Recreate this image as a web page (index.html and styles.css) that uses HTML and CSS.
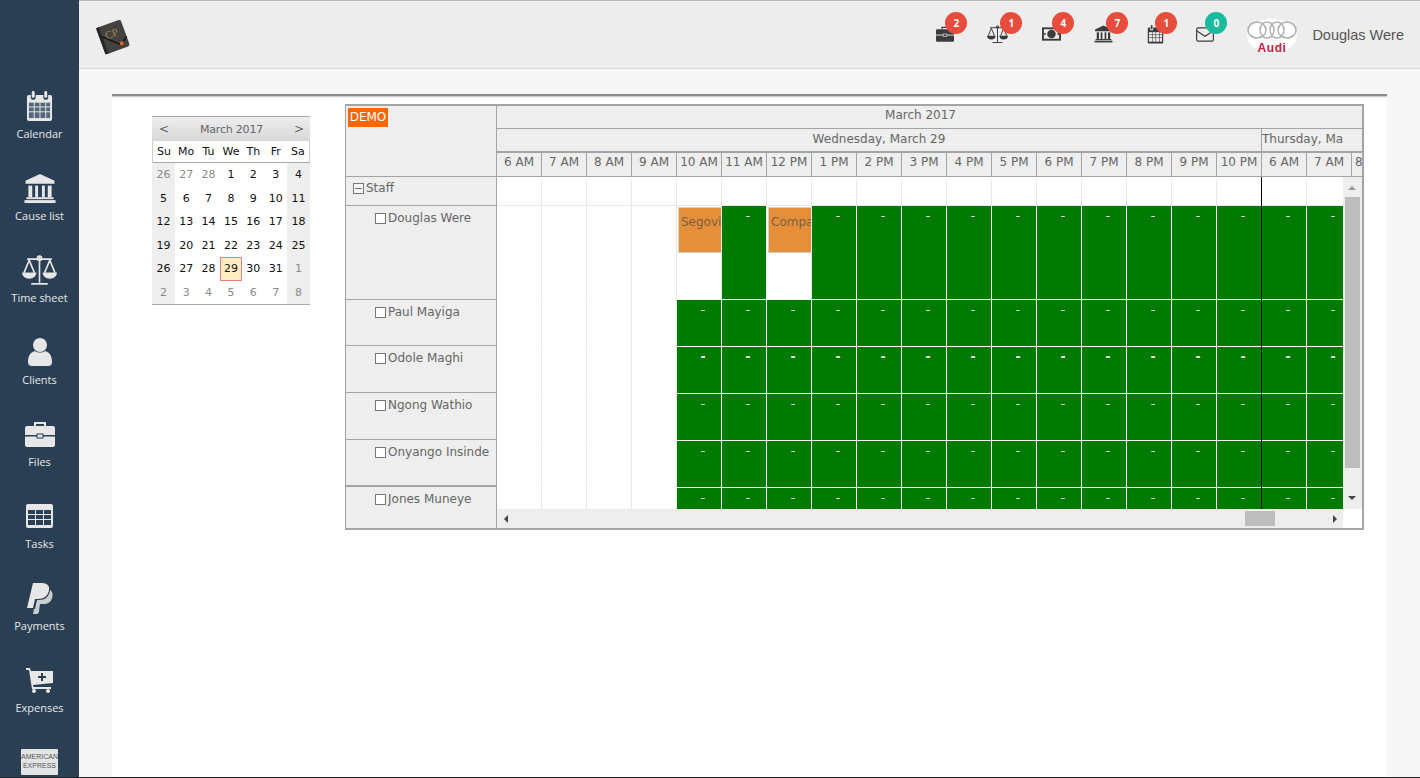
FILE: index.html
```html
<!DOCTYPE html>
<html>
<head>
<meta charset="utf-8">
<title>Calendar</title>
<link rel="stylesheet" href="styles.css">
</head>
<body>
<svg class="defs" width="0" height="0">
  <symbol id="i-cal" viewBox="0 0 28 32">
    <rect x="1" y="4" width="26" height="27" rx="2" fill="currentColor"/>
    <rect x="5" y="1" width="5" height="8" rx="2" fill="var(--hole)"/>
    <rect x="18" y="1" width="5" height="8" rx="2" fill="var(--hole)"/>
    <rect x="6" y="0" width="3" height="7" rx="1.5" fill="currentColor"/>
    <rect x="19" y="0" width="3" height="7" rx="1.5" fill="currentColor"/>
    <g fill="var(--cell)">
      <rect x="3" y="12" width="5" height="4"/><rect x="9" y="12" width="5" height="4"/><rect x="15" y="12" width="5" height="4"/><rect x="21" y="12" width="4" height="4"/>
      <rect x="3" y="17" width="5" height="4"/><rect x="9" y="17" width="5" height="4"/><rect x="15" y="17" width="5" height="4"/><rect x="21" y="17" width="4" height="4"/>
      <rect x="3" y="22" width="5" height="6"/><rect x="9" y="22" width="5" height="6"/><rect x="15" y="22" width="5" height="6"/><rect x="21" y="22" width="4" height="6"/>
    </g>
  </symbol>
  <symbol id="i-bank" viewBox="0 0 32 32">
    <g fill="currentColor">
      <polygon points="16,1 31,8 31,11 1,11 1,8"/>
      <rect x="4" y="13" width="4" height="12"/><rect x="11" y="13" width="3" height="12"/><rect x="18" y="13" width="3" height="12"/><rect x="24" y="13" width="4" height="12"/>
      <rect x="2" y="25" width="28" height="2"/><rect x="0" y="28" width="32" height="3"/>
    </g>
  </symbol>
  <symbol id="i-scale" viewBox="0 0 34 30">
    <g fill="none" stroke="currentColor" stroke-width="1.6">
      <path d="M17 2v25M9 28h16M5 4h24"/>
      <circle cx="17" cy="3" r="2"/>
      <path d="M7 5 2 17M7 5l5 12M27 5l-5 12M27 5l5 12"/>
    </g>
    <path d="M0 17h14a7 6 0 0 1-14 0zM20 17h14a7 6 0 0 1-14 0z" fill="currentColor"/>
  </symbol>
  <symbol id="i-user" viewBox="0 0 24 28">
    <ellipse cx="12" cy="7" rx="7" ry="7" fill="currentColor"/>
    <path d="M0 24c0-7 3-10 7-11 3 2 7 2 10 0 4 1 7 4 7 11 0 3-2 4-4 4H4c-2 0-4-1-4-4z" fill="currentColor"/>
  </symbol>
  <symbol id="i-case" viewBox="0 0 30 26">
    <path d="M10 5V2h10v3" fill="none" stroke="currentColor" stroke-width="2"/>
    <rect x="0" y="5" width="30" height="21" rx="2" fill="currentColor"/>
    <rect x="0" y="14" width="30" height="1.5" fill="var(--hole)"/>
    <rect x="12" y="13" width="6" height="4" fill="currentColor" stroke="var(--hole)"/>
  </symbol>
  <symbol id="i-table" viewBox="0 0 27 24">
    <rect width="27" height="24" rx="2" fill="currentColor"/>
    <g fill="var(--hole)">
      <rect x="2" y="6" width="7" height="4"/><rect x="10" y="6" width="7" height="4"/><rect x="18" y="6" width="7" height="4"/>
      <rect x="2" y="11" width="7" height="4"/><rect x="10" y="11" width="7" height="4"/><rect x="18" y="11" width="7" height="4"/>
      <rect x="2" y="16" width="7" height="5"/><rect x="10" y="16" width="7" height="5"/><rect x="18" y="16" width="7" height="5"/>
    </g>
  </symbol>
  <symbol id="i-pay" viewBox="0 0 26 31">
    <path d="M6 0h9c5 0 8 3 7 7-1 6-5 9-11 9H8l-2 9H0z" fill="currentColor"/>
    <path d="M23 7c3 2 3 5 2 8-1 4-4 6-9 6h-3l-1 7c0 2-1 3-2 3H6l1-5h1l2-9h2c6 0 10-3 11-10z" fill="currentColor" opacity=".85"/>
  </symbol>
  <symbol id="i-cart" viewBox="0 0 27 25">
    <path d="M0 0h4l1 3h22v12l-20 2 .5 2H25v2H6L3 2H0z" fill="currentColor"/>
    <circle cx="8" cy="23" r="2" fill="currentColor"/>
    <circle cx="22" cy="23" r="2" fill="currentColor"/>
    <path d="M15 5h2v3h3v2h-3v3h-2v-3h-3V8h3z" fill="var(--hole)"/>
  </symbol>
  <symbol id="i-money" viewBox="0 0 20 14">
    <rect width="20" height="14" fill="currentColor"/>
    <rect x="2" y="2" width="16" height="10" fill="var(--hole)"/>
    <circle cx="10" cy="7" r="4.5" fill="currentColor"/>
    <circle cx="3" cy="7" r="1" fill="currentColor"/>
    <circle cx="17" cy="7" r="1" fill="currentColor"/>
  </symbol>
  <symbol id="i-mail" viewBox="0 0 20 16">
    <rect x=".7" y=".7" width="18.6" height="14.6" rx="1.5" fill="none" stroke="currentColor" stroke-width="1.3"/>
    <path d="M1 4l9 6 9-6" fill="none" stroke="currentColor" stroke-width="1.3"/>
  </symbol>
</svg>

<div class="page">
  <nav class="sidebar">
    <a class="side-item"><span class="side-icon"><svg width="27" height="31"><use href="#i-cal"/></svg></span><span>Calendar</span></a>
    <a class="side-item"><span class="side-icon"><svg width="32" height="31"><use href="#i-bank"/></svg></span><span>Cause list</span></a>
    <a class="side-item"><span class="side-icon"><svg width="35" height="31"><use href="#i-scale"/></svg></span><span>Time sheet</span></a>
    <a class="side-item"><span class="side-icon"><svg width="24" height="28"><use href="#i-user"/></svg></span><span>Clients</span></a>
    <a class="side-item"><span class="side-icon"><svg width="30" height="26"><use href="#i-case"/></svg></span><span>Files</span></a>
    <a class="side-item"><span class="side-icon"><svg width="27" height="24"><use href="#i-table"/></svg></span><span>Tasks</span></a>
    <a class="side-item"><span class="side-icon"><svg width="26" height="31"><use href="#i-pay"/></svg></span><span>Payments</span></a>
    <a class="side-item"><span class="side-icon"><svg width="27" height="25"><use href="#i-cart"/></svg></span><span>Expenses</span></a>
    <a class="side-item"><span class="side-icon"><svg class="amex" width="37" height="26" viewBox="0 0 37 26"><rect width="37" height="26" rx="1" fill="#e4e4e4"/><text x="18.5" y="10" text-anchor="middle">AMERICAN</text><text x="18.5" y="19" text-anchor="middle">EXPRESS</text></svg></span></a>
  </nav>

  <div class="main">
    <header class="topbar">
      <div class="logo">
        <svg width="38" height="38" viewBox="0 0 38 38">
          <g transform="rotate(-20 19 19)">
            <rect x="6" y="5" width="26" height="28" rx="2" fill="#43423f"/>
            <rect x="6" y="5" width="3" height="28" fill="#262524"/>
            <path d="M9 15l15 14 8-6" fill="none" stroke="#161616" stroke-width="1.6"/>
            <circle cx="25" cy="28" r="2" fill="#e0692b"/>
            <text class="logo-text" x="12" y="19">CP</text>
          </g>
        </svg>
      </div>
      <div class="notif"><svg width="18" height="16"><use href="#i-case"/></svg><b class="badge b-near">2</b></div>
      <div class="notif"><svg width="21" height="19"><use href="#i-scale"/></svg><b class="badge b-far">1</b></div>
      <div class="notif n-right"><svg width="19" height="14"><use href="#i-money"/></svg><b class="badge">4</b></div>
      <div class="notif"><svg width="19" height="18"><use href="#i-bank"/></svg><b class="badge b-far">7</b></div>
      <div class="notif"><svg width="17" height="19"><use href="#i-cal"/></svg><b class="badge b-near">1</b></div>
      <div class="notif n-left"><svg width="18" height="15"><use href="#i-mail"/></svg><b class="badge b-near teal">0</b></div>
      <div class="avatar">
        <svg width="52" height="38" viewBox="0 0 52 38">
          <ellipse cx="26" cy="19" rx="25" ry="17" fill="#fff"/>
          <g fill="none" stroke="#b0b0b0" stroke-width="1.5">
            <ellipse cx="11" cy="13" rx="9" ry="8"/><ellipse cx="21" cy="13" rx="7" ry="8"/><ellipse cx="31" cy="13" rx="7" ry="8"/><ellipse cx="41" cy="13" rx="9" ry="8"/>
          </g>
          <text class="audi" x="26" y="35" text-anchor="middle">Audi</text>
        </svg>
      </div>
      <div class="username">Douglas Were</div>
    </header>

    <div class="content">
      <div class="panel">
        <div class="minical">
          <div class="mc-title"><span>&lt;</span><span class="mc-month">March 2017</span><span>&gt;</span></div>
          <div class="mc-row mc-head"><span>Su</span><span>Mo</span><span>Tu</span><span>We</span><span>Th</span><span>Fr</span><span>Sa</span></div>
          <div class="mc-row"><span class="we off">26</span><span class="off">27</span><span class="off">28</span><span>1</span><span>2</span><span>3</span><span class="we">4</span></div>
          <div class="mc-row"><span class="we">5</span><span>6</span><span>7</span><span>8</span><span>9</span><span>10</span><span class="we">11</span></div>
          <div class="mc-row"><span class="we">12</span><span>13</span><span>14</span><span>15</span><span>16</span><span>17</span><span class="we">18</span></div>
          <div class="mc-row"><span class="we">19</span><span>20</span><span>21</span><span>22</span><span>23</span><span>24</span><span class="we">25</span></div>
          <div class="mc-row"><span class="we">26</span><span>27</span><span>28</span><span class="today">29</span><span>30</span><span>31</span><span class="we off">1</span></div>
          <div class="mc-row mc-last"><span class="we off">2</span><span class="off">3</span><span class="off">4</span><span class="off">5</span><span class="off">6</span><span class="off">7</span><span class="we off">8</span></div>
        </div>

        <div class="sched">
          <div class="res-col">
            <div class="res-head"><span class="demo">DEMO</span></div>
            <div class="res r-staff"><i class="box minus"></i>Staff</div>
            <div class="res r-tall sub"><i class="box"></i>Douglas Were</div>
            <div class="res r-std sub"><i class="box"></i>Paul Mayiga</div>
            <div class="res r-std sub"><i class="box"></i>Odole Maghi</div>
            <div class="res r-std sub"><i class="box"></i>Ngong Wathio</div>
            <div class="res r-std sub r-thick"><i class="box"></i>Onyango Insinde</div>
            <div class="res r-end sub"><i class="box"></i>Jones Muneye</div>
          </div>

          <div class="time-col">
            <div class="t-month">March 2017</div>
            <div class="t-days"><div class="t-day">Wednesday, March 29</div><div class="t-day2">Thursday, Ma</div></div>
            <div class="t-hours">
              <span>6 AM</span><span>7 AM</span><span>8 AM</span><span>9 AM</span><span>10 AM</span><span>11 AM</span><span>12 PM</span><span>1 PM</span><span>2 PM</span><span>3 PM</span><span>4 PM</span><span>5 PM</span><span>6 PM</span><span>7 PM</span><span>8 PM</span><span>9 PM</span><span>10 PM</span><span>6 AM</span><span>7 AM</span><span class="t-more">8</span>
            </div>
            <div class="t-body">
              <div class="grid">
                <div class="now"></div>
                <div class="g-row r-staff"><i></i><i></i><i></i><i></i><i></i><i></i><i></i><i></i><i></i><i></i><i></i><i></i><i></i><i></i><i></i><i></i><i></i><i></i><i></i></div>
                <div class="g-row r-tall"><i></i><i></i><i></i><i></i><i class="half"><b>Segovi</b></i><i class="g">-</i><i class="half"><b>Compa</b></i><i class="g">-</i><i class="g">-</i><i class="g">-</i><i class="g">-</i><i class="g">-</i><i class="g">-</i><i class="g">-</i><i class="g">-</i><i class="g">-</i><i class="g">-</i><i class="g">-</i><i class="g">-</i></div>
                <div class="g-row r-std"><i></i><i></i><i></i><i></i><i class="g">-</i><i class="g">-</i><i class="g">-</i><i class="g">-</i><i class="g">-</i><i class="g">-</i><i class="g">-</i><i class="g">-</i><i class="g">-</i><i class="g">-</i><i class="g">-</i><i class="g">-</i><i class="g">-</i><i class="g">-</i><i class="g">-</i></div>
                <div class="g-row r-std bold"><i></i><i></i><i></i><i></i><i class="g">-</i><i class="g">-</i><i class="g">-</i><i class="g">-</i><i class="g">-</i><i class="g">-</i><i class="g">-</i><i class="g">-</i><i class="g">-</i><i class="g">-</i><i class="g">-</i><i class="g">-</i><i class="g">-</i><i class="g">-</i><i class="g">-</i></div>
                <div class="g-row r-std"><i></i><i></i><i></i><i></i><i class="g">-</i><i class="g">-</i><i class="g">-</i><i class="g">-</i><i class="g">-</i><i class="g">-</i><i class="g">-</i><i class="g">-</i><i class="g">-</i><i class="g">-</i><i class="g">-</i><i class="g">-</i><i class="g">-</i><i class="g">-</i><i class="g">-</i></div>
                <div class="g-row r-std"><i></i><i></i><i></i><i></i><i class="g">-</i><i class="g">-</i><i class="g">-</i><i class="g">-</i><i class="g">-</i><i class="g">-</i><i class="g">-</i><i class="g">-</i><i class="g">-</i><i class="g">-</i><i class="g">-</i><i class="g">-</i><i class="g">-</i><i class="g">-</i><i class="g">-</i></div>
                <div class="g-row r-last"><i></i><i></i><i></i><i></i><i class="g">-</i><i class="g">-</i><i class="g">-</i><i class="g">-</i><i class="g">-</i><i class="g">-</i><i class="g">-</i><i class="g">-</i><i class="g">-</i><i class="g">-</i><i class="g">-</i><i class="g">-</i><i class="g">-</i><i class="g">-</i><i class="g">-</i></div>
              </div>
              <div class="vscroll"><i class="arr-up"></i><i class="v-thumb"></i><i class="arr-down"></i></div>
            </div>
            <div class="hscroll"><div class="h-track"><i class="arr-left"></i><i class="h-thumb"></i><i class="arr-right"></i></div></div>
          </div>
        </div>
      </div>
    </div>
  </div>
</div>
</body>
</html>
```
FILE: styles.css
```css
html, body {
    margin: 0;
    height: 778px;
    overflow: hidden;
    background: #222;
    font-family: "Liberation Sans", Arial, sans-serif;
}

.defs {
    position: absolute;
}

.page {
    display: flex;
    height: 777px;
    overflow: hidden;
}

/* left nav */
.sidebar {
    flex: 0 0 79px;
    padding-top: 88px;
    background: #2a3f54;
    color: #e7e7e7;
    --hole: #2a3f54;
    --cell: #55677b;
    font-family: "Open Sans", sans-serif;
    font-size: 11px;
    overflow: hidden;
}

.side-item {
    display: flex;
    flex-direction: column;
    align-items: center;
    height: 82px;
    line-height: 14px;
}

.side-icon {
    display: flex;
    align-items: center;
    justify-content: center;
    height: 36px;
    margin-bottom: 3px;
}

.amex text {
    font-size: 7px;
    font-family: "Liberation Sans", sans-serif;
    fill: #555;
}

/* top bar */
.main {
    flex: 1;
    display: flex;
    flex-direction: column;
    background: #f7f7f7;
}

.topbar {
    display: flex;
    align-items: center;
    height: 67px;
    padding-right: 16px;
    border-top: 1px solid #b9b9b9;
    border-bottom: 1px solid #dcdcdc;
    background: #ededed;
    color: #3c3c3c;
    --hole: #ededed;
    --cell: #ededed;
}

.logo {
    margin-left: 15px;
    margin-right: auto;
    height: 38px;
    margin-top: 5px;
}

.logo-text {
    font-family: "Liberation Serif", serif;
    font-size: 11px;
    fill: #a8834e;
}

.notif {
    position: relative;
    display: flex;
    align-items: center;
    justify-content: center;
    width: 52px;
    height: 30px;
    margin-top: -1px;
}

.n-right {
    margin-left: 2px;
}

.n-left {
    margin-left: -2px;
}

.badge {
    position: absolute;
    left: 27px;
    top: -7px;
    width: 22px;
    height: 22px;
    border-radius: 50%;
    background: #e74c3c;
    color: #fff;
    font: bold 10px/22px "Open Sans", sans-serif;
    text-align: center;
}

.b-far {
    left: 29px;
}

.b-near {
    left: 26px;
}

.teal {
    background: #1abb9c;
}

.avatar {
    margin-left: 15px;
    height: 38px;
    margin-top: 3px;
}

.audi {
    font: bold 12px "Liberation Sans", sans-serif;
    letter-spacing: .6px;
    fill: #c8203c;
}

.username {
    margin-left: 14px;
    font-size: 14.5px;
    color: #555;
}

/* content */
.content {
    flex: 1;
    padding: 25px 33px 0;
    min-height: 0;
}

.panel {
    display: flex;
    align-items: flex-start;
    height: 100%;
    padding: 8px 23px 0 40px;
    background: #fff;
    border-top: 2px solid #8c8c8c;
    box-shadow: inset 0 2px 2px -1px rgba(0, 0, 0, .25);
    box-sizing: border-box;
}

/* mini calendar */
.minical {
    flex: 0 0 158px;
    margin-top: 12px;
    margin-right: 35px;
    font-family: "DejaVu Sans", sans-serif;
    font-size: 11px;
    color: #111;
}

.mc-title {
    display: flex;
    justify-content: space-between;
    align-items: center;
    height: 24px;
    padding: 0 6px 0 7px;
    border-top: 1px solid #a8a8a8;
    background: linear-gradient(#eee, #d8d8d8);
    color: #666;
    font-size: 12px;
}

.mc-month {
    font-size: 11px;
    letter-spacing: -.2px;
}

.mc-row {
    display: grid;
    grid-template-columns: 23px repeat(5, 22.4px) 23px;
    height: 23.5px;
    line-height: 23px;
    text-align: center;
}

.mc-head {
    height: 22px;
    line-height: 21px;
    border-bottom: 1px solid #a8a8a8;
    border-right: 1px solid #ccc;
    border-left: 1px solid #ccc;
    box-sizing: border-box;
    grid-template-columns: 22px repeat(5, 22.4px) 22px;
}

.mc-last {
    border-bottom: 1px solid #aaa;
}

.we {
    background: #eeeeee;
}

.off {
    color: #8a8a8a;
}

.today {
    background: #ffeec2;
    outline: 1px solid #e58080;
    outline-offset: -1px;
}

/* scheduler */
.sched {
    display: flex;
    flex: 0 0 1019px;
    height: 426px;
    border: 2px solid #a4a4a4;
    border-width: 2px 2px 2px 1px;
    box-sizing: border-box;
    font-family: "DejaVu Sans", sans-serif;
    font-size: 12px;
    color: #666;
    overflow: hidden;
}

.res-col {
    flex: 0 0 150px;
    display: flex;
    flex-direction: column;
    background: #eeeeee;
    border-right: 1px solid #a4a4a4;
}

.res-head {
    height: 71px;
    padding: 2px 2px;
    border-bottom: 1px solid #a4a4a4;
    box-sizing: border-box;
}

.demo {
    display: inline-block;
    width: 40px;
    height: 19px;
    background: #ff6600;
    color: #fff;
    font-size: 12px;
    line-height: 19px;
    text-align: center;
}

.res {
    display: flex;
    align-items: flex-start;
    padding-left: 7px;
    padding-top: 3px;
    box-sizing: border-box;
    border-bottom: 1px solid #a4a4a4;
    white-space: nowrap;
    line-height: 18px;
}

.sub {
    padding-left: 29px;
}

.box {
    flex: 0 0 9px;
    width: 9px;
    height: 9px;
    margin: 4px 2px 0 0;
    border: 1px solid #777;
    background: #fff;
}

.minus {
    background: linear-gradient(#777, #777) center / 7px 1px no-repeat #f4f4f4;
}

.r-staff {
    height: 29px;
    padding-top: 2px;
}

.r-tall {
    height: 94px;
}

.r-std {
    height: 47px;
}

.r-thick {
    border-bottom-width: 2px;
}

.r-end {
    height: 41px;
    border-bottom: 0;
}

.r-last {
    height: 22px;
}

.time-col {
    flex: 1;
    min-width: 0;
    overflow: hidden;
}

.t-month {
    height: 22px;
    padding-right: 18px;
    border-bottom: 1px solid #a4a4a4;
    background: #eeeeee;
    line-height: 18px;
    text-align: center;
}

.t-days {
    display: flex;
    height: 22px;
    border-bottom: 2px solid #a4a4a4;
    background: #eeeeee;
    line-height: 21px;
    white-space: nowrap;
    overflow: hidden;
}

.t-day {
    flex: 0 0 764px;
    border-right: 1px solid #a4a4a4;
    text-align: center;
}

.t-hours {
    display: flex;
    height: 23px;
    border-bottom: 1px solid #a4a4a4;
    background: #eeeeee;
    line-height: 19px;
}

.t-hours span {
    flex: 0 0 44px;
    border-right: 1px solid #a4a4a4;
    text-align: center;
    white-space: nowrap;
    overflow: hidden;
}

.t-hours .t-more {
    flex: 0 0 auto;
    padding-left: 3px;
    border-right: 0;
}

.t-body {
    position: relative;
    display: flex;
    height: 332px;
}

.grid {
    position: relative;
    flex: 0 0 846px;
    overflow: hidden;
}

.now {
    position: absolute;
    left: 764px;
    top: 0;
    bottom: 0;
    width: 1px;
    background: #000;
    z-index: 2;
}

.g-row {
    display: flex;
    border-bottom: 1px solid #e8e8e8;
    box-sizing: border-box;
}

.g-row i {
    position: relative;
    flex: 0 0 44px;
    border-right: 1px solid #e8e8e8;
    font-style: normal;
    overflow: hidden;
}

.g-row i.g {
    box-sizing: border-box;
    flex-basis: 45px;
    padding-left: 8px;
    border-right-color: #fff;
    background: #007a00;
    color: #fff;
    font-size: 12px;
    line-height: 20px;
    text-align: center;
}

.g-row:has(.g) {
    border-bottom-color: #fff;
}

.bold .g {
    font-weight: bold;
}

.half {
    background: #fff;
}

.half b {
    display: block;
    height: 46px;
    margin: 1px 0 0 1px;
    padding: 7px 0 0 2px;
    box-sizing: border-box;
    background: #e68f3a;
    border: 1px solid #d8d0c4;
    border-right: 0;
    color: #7d5f3e;
    font-weight: normal;
    white-space: nowrap;
    overflow: hidden;
}

.vscroll {
    position: relative;
    flex: 0 0 19px;
    background: #eeeeee;
}

.v-thumb {
    position: absolute;
    left: 2px;
    top: 20px;
    width: 15px;
    height: 271px;
    background: #bdbdbd;
}

.arr-up, .arr-down, .arr-left, .arr-right {
    position: absolute;
    width: 0;
    height: 0;
    border: 4px solid transparent;
}

.arr-up {
    left: 5px;
    top: 5px;
    border-bottom-color: #999;
}

.arr-down {
    left: 5px;
    bottom: 5px;
    border-top-color: #444;
}

.hscroll {
    height: 19px;
    background: #fff;
}

.h-track {
    position: relative;
    width: 846px;
    height: 19px;
    background: #eeeeee;
}

.h-thumb {
    position: absolute;
    left: 748px;
    top: 2px;
    width: 30px;
    height: 15px;
    background: #bdbdbd;
}

.arr-left {
    left: 3px;
    top: 6px;
    border-right-color: #444;
}

.arr-right {
    right: 2px;
    top: 6px;
    border-left-color: #444;
}
```
